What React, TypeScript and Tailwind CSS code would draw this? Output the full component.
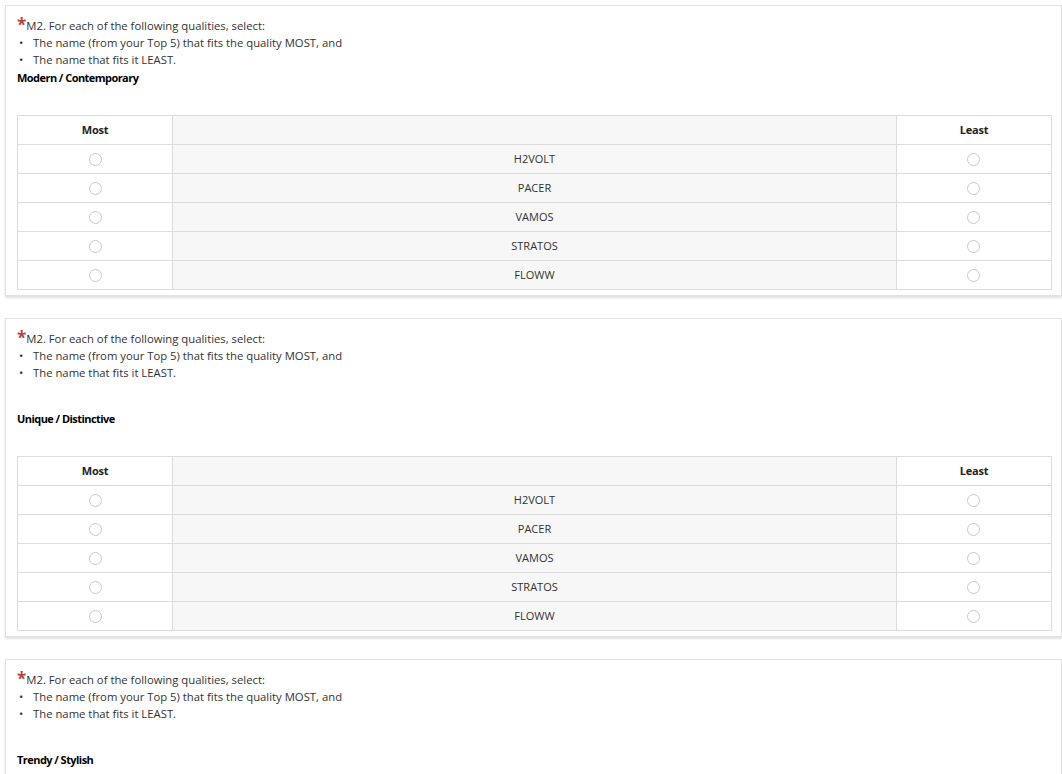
import React from "react"

const names = ["H2VOLT", "PACER", "VAMOS", "STRATOS", "FLOWW"]

const questions = [
  { label: "Modern / Contemporary", spaced: false },
  { label: "Unique / Distinctive", spaced: true },
  { label: "Trendy / Stylish", spaced: true },
]

function Radio() {
  return <span className="inline-block w-[13px] h-[13px] rounded-full border border-[#c9c9c9] bg-white align-middle" />
}

function Question({ label, spaced }: { label: string; spaced: boolean }) {
  return (
    <div className="bg-white border border-[#e2e2e2] shadow-[0_2px_2px_rgba(0,0,0,0.12)] pt-[9px] pl-[11px] pr-[9px] pb-[5px]">
      <div className="text-[11.3px] leading-[17px] text-[#333]">
        <div>
          <span className="text-[#b5443f] text-[17px] font-bold leading-none relative top-[1px]">*</span>
          M2. For each of the following qualities, select:
        </div>
        <div className="flex">
          <span className="w-[16px] pl-[2px]">•</span>
          <span>The name (from your Top 5) that fits the quality MOST, and</span>
        </div>
        <div className="flex">
          <span className="w-[16px] pl-[2px]">•</span>
          <span>The name that fits it LEAST.</span>
        </div>
        <div className={`font-bold text-black text-[11px] tracking-[-0.55px] ${spaced ? "mt-[29px]" : "mt-[1px]"}`}>{label}</div>
      </div>
      <table className="w-full table-fixed border-collapse mt-[29px] text-[11px] text-[#333]">
        <colgroup>
          <col className="w-[15%]" />
          <col className="w-[70%]" />
          <col className="w-[15%]" />
        </colgroup>
        <thead>
          <tr className="h-[29px]">
            <th className="border border-[#dcdcdc] font-bold text-[#222] tracking-[-0.2px]">Most</th>
            <th className="border border-[#dcdcdc] bg-[#f7f7f7]"></th>
            <th className="border border-[#dcdcdc] font-bold text-[#222] tracking-[-0.2px]">Least</th>
          </tr>
        </thead>
        <tbody>
          {names.map((n) => (
            <tr key={n} className="h-[29px]">
              <td className="border border-[#dcdcdc] text-center">
                <Radio />
              </td>
              <td className="border border-[#dcdcdc] bg-[#f7f7f7] text-center">{n}</td>
              <td className="border border-[#dcdcdc] text-center">
                <Radio />
              </td>
            </tr>
          ))}
        </tbody>
      </table>
    </div>
  )
}

export default function App() {
  return (
    <div className="min-h-screen bg-white pl-[5px] pt-[5px] flex flex-col gap-[22px]" style={{ fontFamily: '"Open Sans", sans-serif' }}>
      {questions.map((q) => (
        <Question key={q.label} label={q.label} spaced={q.spaced} />
      ))}
    </div>
  )
}
